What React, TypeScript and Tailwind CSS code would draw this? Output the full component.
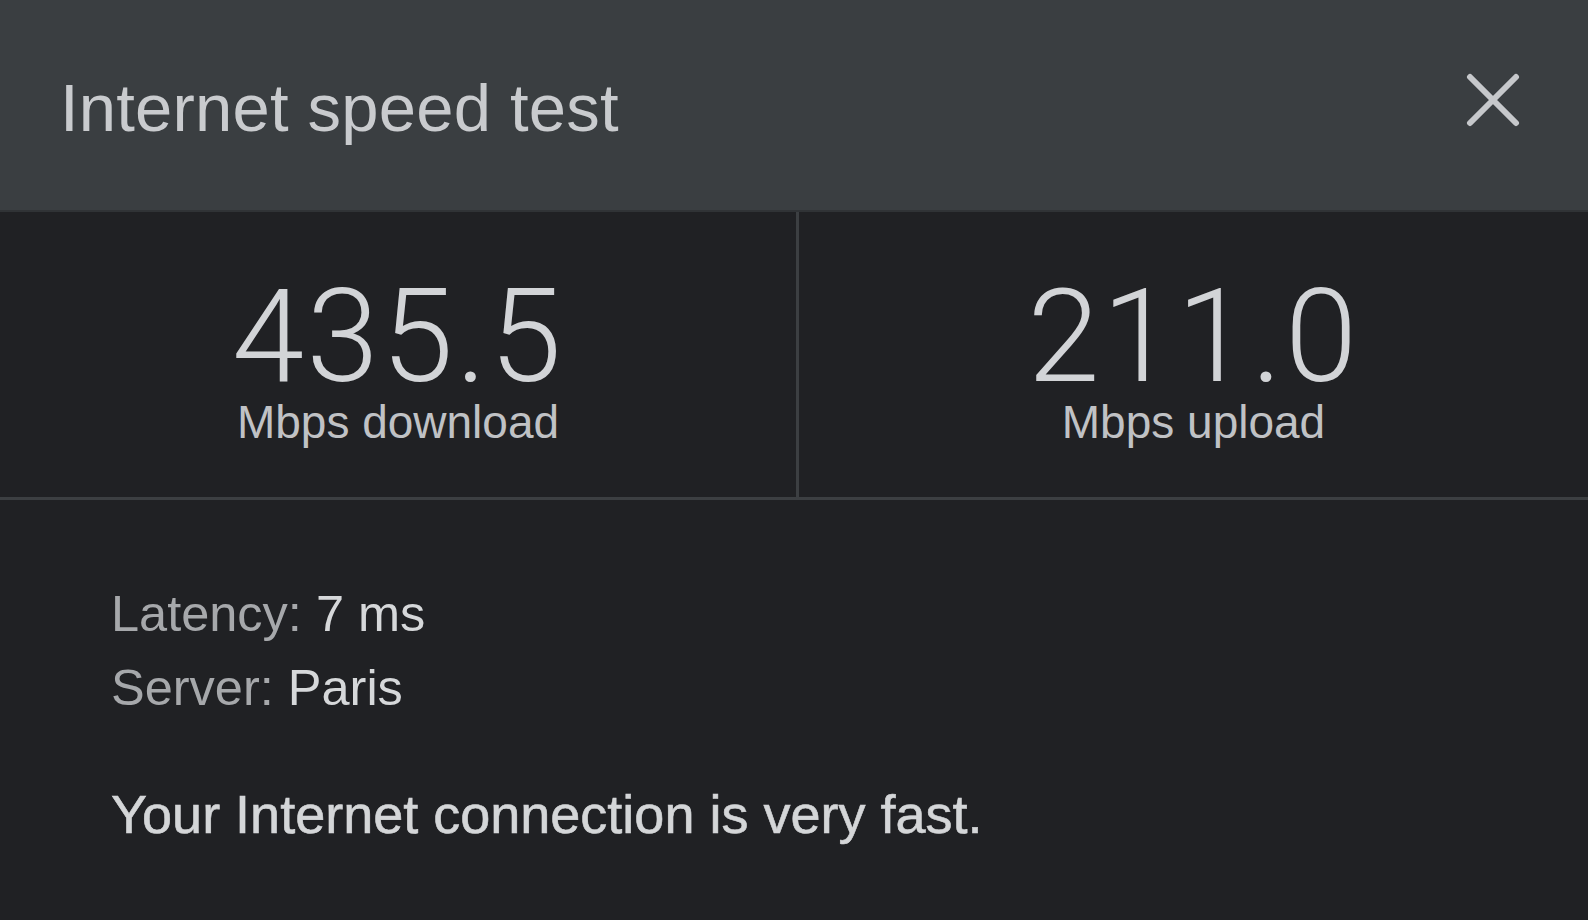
import { useState } from 'react'

type Stat = { value: string, label: string }

const stats: Stat[] = [
  { value: '435.5', label: 'Mbps download' },
  { value: '211.0', label: 'Mbps upload' },
]

function CloseIcon() {
  return (
    <svg width="54" height="54" viewBox="0 0 54 54" fill="none" aria-hidden="true">
      <path d="M4 4L50 50M50 4L4 50" stroke="#c6c8cb" strokeWidth="6" strokeLinecap="round" />
    </svg>
  )
}

export default function App() {
  const [open, setOpen] = useState(true)

  if (!open) return <div className="h-[920px] w-full bg-[#202124]" />

  return (
    <div className="flex h-[920px] w-full flex-col bg-[#202124] font-['Liberation_Sans',Arial,sans-serif]">
      {/* Header */}
      <div className="flex h-[212px] shrink-0 items-center justify-between border-b-2 border-[#303336] bg-[#3a3e41] pl-[60px] pr-[68px] pt-[4px]">
        <h1 className="text-[67px] leading-none font-normal tracking-[0.2px] text-[#c9cbce]">Internet speed test</h1>
        <button onClick={() => setOpen(false)} aria-label="Close" className="mb-[14px] flex items-center justify-center">
          <CloseIcon />
        </button>
      </div>

      {/* Speeds */}
      <div className="grid h-[288px] shrink-0 grid-cols-[799px_1fr] border-b-[3px] border-[#3c3f42]">
        {stats.map((s, i) => (
          <div
            key={s.label}
            className={`flex flex-col items-center pt-[69px] ${i === 0 ? 'border-r-[3px] border-[#3c3f42]' : ''}`}
          >
            <div className="font-['Roboto',sans-serif] text-[130px] leading-[112px] font-light tracking-[2.5px] text-[#d2d4d7]">{s.value}</div>
            <div className="mt-[6px] text-[46px] leading-none text-[#c0c2c5]">{s.label}</div>
          </div>
        ))}
      </div>

      {/* Details */}
      <div className="flex flex-col pl-[111px] pt-[77px]">
        <div className="text-[50.5px] leading-[74px]">
          <span className="text-[#a6a8ab]">Latency: </span>
          <span className="text-[#d6d8da]">7 ms</span>
        </div>
        <div className="text-[50.5px] leading-[74px]">
          <span className="text-[#a6a8ab]">Server: </span>
          <span className="text-[#d6d8da]">Paris</span>
        </div>
        <p className="mt-[62px] text-[54px] leading-none text-[#d4d6d8] [-webkit-text-stroke:0.6px_#d4d6d8]">
          Your Internet connection is very fast.
        </p>
      </div>
    </div>
  )
}
